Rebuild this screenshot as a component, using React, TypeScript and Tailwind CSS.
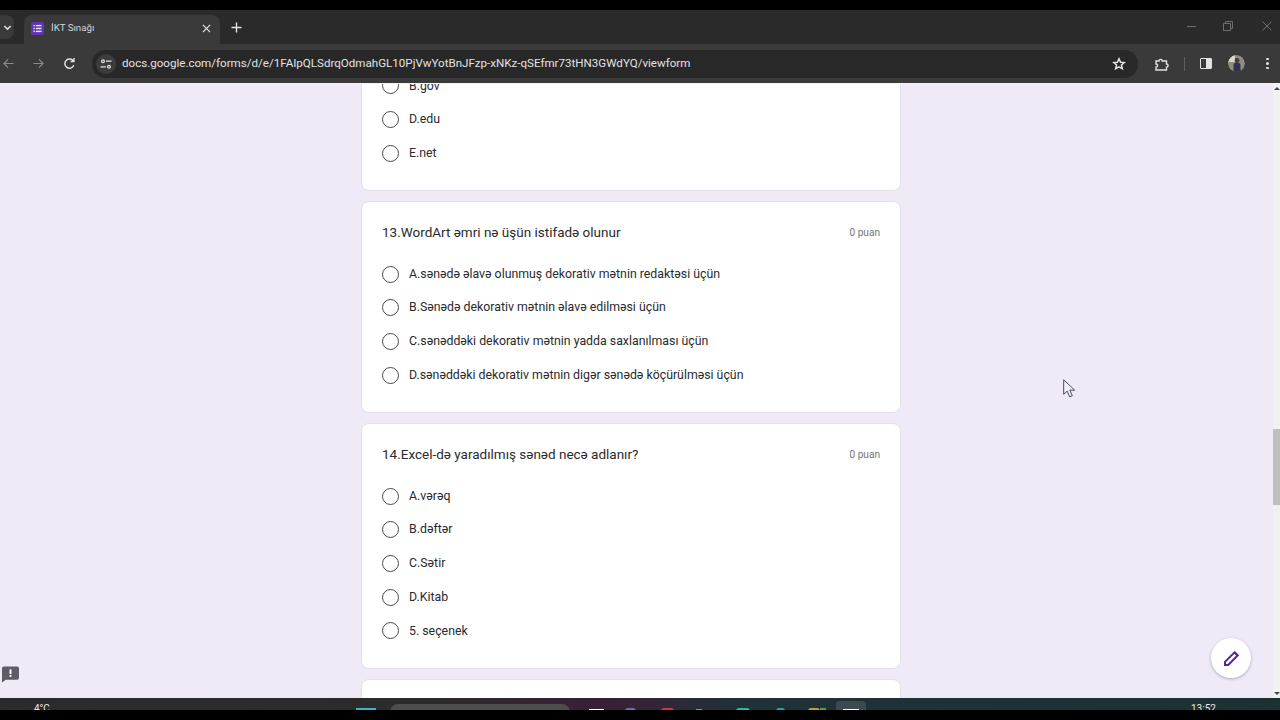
const sections = [
  {
    title: "13.WordArt əmri nə üşün istifadə olunur",
    options: [
      "A.sənədə əlavə olunmuş dekorativ mətnin redaktəsi üçün",
      "B.Sənədə dekorativ mətnin əlavə edilməsi üçün",
      "C.sənəddəki dekorativ mətnin yadda saxlanılması üçün",
      "D.sənəddəki dekorativ mətnin digər sənədə köçürülməsi üçün",
    ],
    height: "h-[211.5px]",
  },
  {
    title: "14.Excel-də yaradılmış sənəd necə adlanır?",
    options: ["A.vərəq", "B.dəftər", "C.Sətir", "D.Kitab", "5. seçenek"],
    height: "h-[245.5px]",
  },
];

function Option({ label }: { label: string }) {
  return (
    <div className="flex h-[33.7px] shrink-0 items-center">
      <div className="h-[17px] w-[17px] shrink-0 rounded-full border-[1.5px] border-[#4a4a4a]" />
      <span className="ml-[10px] text-[12.34px] text-[#2a2b2e]">{label}</span>
    </div>
  );
}

function Tabstrip() {
  return (
    <div className="flex h-[34px] shrink-0 items-end bg-[#2a2a2a]">
      <div className="mb-[5px] flex h-6 w-[14px] items-center justify-center rounded-r-lg bg-[#3a3a3a]">
        <svg width="9" height="9" viewBox="0 0 10 10" fill="none" stroke="#e3e3e3" strokeWidth="1.6">
          <path d="M1.5 3.2 5 6.8l3.5-3.6" />
        </svg>
      </div>
      <div className="ml-[10px] flex h-[29px] w-[196px] items-center rounded-t-lg bg-[#3a3a3a] pb-[2px] pl-[7px]">
        <div className="flex h-[13px] w-[13px] items-center justify-center rounded-[2px] bg-[#5e35b1]">
          <svg width="9" height="9" viewBox="0 0 10 10" fill="#e8e0f5">
            <rect x="0.5" y="1" width="1.6" height="1.6" />
            <rect x="3.2" y="1" width="6.3" height="1.6" />
            <rect x="0.5" y="4.2" width="1.6" height="1.6" />
            <rect x="3.2" y="4.2" width="6.3" height="1.6" />
            <rect x="0.5" y="7.4" width="1.6" height="1.6" />
            <rect x="3.2" y="7.4" width="6.3" height="1.6" />
          </svg>
        </div>
        <span className="ml-[7px] flex-1 text-[9.7px] text-[#d5d5d5]">İKT Sınağı</span>
        <svg className="mr-[9px]" width="9" height="9" viewBox="0 0 10 10" stroke="#e3e3e3" strokeWidth="1.4">
          <path d="m1 1 8 8M9 1l-8 8" />
        </svg>
      </div>
      <svg className="mb-[11px] ml-[11px]" width="11" height="11" viewBox="0 0 11 11" stroke="#e3e3e3" strokeWidth="1.4">
        <path d="M5.5 0.5v10M0.5 5.5h10" />
      </svg>
      <div className="mb-[13px] ml-auto flex items-center gap-[29px] pr-[8px]">
        <div className="-mr-[2px] h-px w-[9px] bg-[#6e6e6e]" />
        <svg width="10" height="10" viewBox="0 0 10 10" fill="none" stroke="#6e6e6e">
          <path d="M.5 2.5h7v7h-7zM2.5 2.5v-2h7v7h-2" />
        </svg>
        <svg width="10" height="10" viewBox="0 0 10 10" stroke="#6e6e6e">
          <path d="m.5.5 9 9M9.5.5l-9 9" />
        </svg>
      </div>
    </div>
  );
}

function Toolbar() {
  return (
    <div className="flex h-[39px] shrink-0 items-center bg-[#3a3a3a]">
      <svg className="ml-[3px]" width="11" height="11" viewBox="0 0 12 12" fill="none" stroke="#8a8a8a" strokeWidth="1.3">
        <path d="M11.5 6H1M5.5 1.5 1 6l4.5 4.5" />
      </svg>
      <svg className="ml-[19px]" width="11" height="11" viewBox="0 0 12 12" fill="none" stroke="#8a8a8a" strokeWidth="1.3">
        <path d="M.5 6H11M6.5 1.5 11 6l-4.5 4.5" />
      </svg>
      <svg className="ml-[19px]" width="13" height="13" viewBox="0 0 14 14" fill="none" stroke="#e3e3e3" strokeWidth="1.5">
        <path d="M11.6 9a5 5 0 1 1-.3-4.4M11.8 1.2v3.7H8.1" />
      </svg>
      <div className="ml-[16px] flex h-[28px] w-[1046px] items-center rounded-full bg-[#282828]">
        <div className="ml-[4px] flex h-[20px] w-[20px] items-center justify-center rounded-full bg-[#3c3c3c]">
          <svg width="12" height="12" viewBox="0 0 12 12" fill="none" stroke="#e3e3e3" strokeWidth="1.2">
            <circle cx="3" cy="3.2" r="1.4" />
            <path d="M6 3.2h5.5M.5 8.8H6" />
            <circle cx="9" cy="8.8" r="1.4" />
          </svg>
        </div>
        <span className="ml-[6px] text-[11.58px] text-[#e3e3e3]">
          docs.google.com/forms/d/e/1FAIpQLSdrqOdmahGL10PjVwYotBnJFzp-xNKz-qSEfmr73tHN3GWdYQ/viewform
        </span>
        <svg className="ml-auto mr-[12px]" width="14" height="14" viewBox="0 0 24 24" fill="none" stroke="#e3e3e3" strokeWidth="2.6">
          <path d="m12 3 2.7 6 6.3.6-4.8 4.2 1.5 6.3L12 16.8 6.3 20.1l1.5-6.3L3 9.6 9.3 9z" />
        </svg>
      </div>
      <svg className="ml-[17px]" width="14" height="14" viewBox="0 0 14 14" fill="none" stroke="#e3e3e3" strokeWidth="1.4">
        <path d="M1 4h3a1.6 1.6 0 0 1 3.2 0h4.3v3a1.6 1.6 0 0 1 0 3.2V13H1v-2.8a1.6 1.6 0 0 0 0-3.2z" />
      </svg>
      <div className="ml-[15px] h-[14px] w-px bg-[#5c5c5c]" />
      <div className="ml-[15px] flex h-[11px] w-[12px] rounded-[1px] border-[1.3px] border-[#e3e3e3]">
        <div className="ml-auto h-full w-[5px] bg-[#e3e3e3]" />
      </div>
      <svg className="ml-[16px] rounded-full" width="17" height="17" viewBox="0 0 17 17">
        <circle cx="8.5" cy="8.5" r="8.5" fill="#8f8d7c" />
        <path d="M0 8.5a8.5 8.5 0 0 1 7-8.4V7H1z" fill="#d8d8cc" />
        <circle cx="9" cy="5.5" r="2.4" fill="#4a3a3a" />
        <path d="M5.5 17V10c0-1.5 1.5-2.4 3.5-2.4s3.5.9 3.5 2.4v7z" fill="#2f3350" />
      </svg>
      <div className="ml-[21px] flex flex-col gap-[2px]">
        <div className="h-[2.5px] w-[2.5px] rounded-full bg-[#e3e3e3]" />
        <div className="h-[2.5px] w-[2.5px] rounded-full bg-[#e3e3e3]" />
        <div className="h-[2.5px] w-[2.5px] rounded-full bg-[#e3e3e3]" />
      </div>
    </div>
  );
}

function Scrollbar() {
  return (
    <div className="flex w-[7px] shrink-0 flex-col bg-[#f1f1f1]">
      <div className="flex h-[9px] items-center justify-end">
        <div className="h-0 w-0 border-x-[3px] border-b-[3px] border-x-transparent border-b-[#444]" />
      </div>
      <div className="mt-[336px] h-[76px] bg-[#bfbfbf]" />
      <div className="mt-auto flex h-[9px] items-center justify-end">
        <div className="h-0 w-0 border-x-[3px] border-t-[3px] border-x-transparent border-t-[#444]" />
      </div>
    </div>
  );
}

export default function App() {
  return (
    <div className="flex h-[720px] w-[1280px] flex-col overflow-hidden bg-black font-['Roboto',sans-serif]">
      <div className="h-[10px] shrink-0 bg-black" />
      <Tabstrip />
      <Toolbar />
      <div className="h-px shrink-0 bg-[#f4f2f8]" />

      <div className="relative flex h-[614px] shrink-0 bg-[#efeaf6]">
        <div className="flex-1 overflow-hidden">
          <div className="ml-[361px] flex w-[540px] flex-col gap-[10.5px]">
            <div className="-mt-[17px] flex h-[123.5px] shrink-0 flex-col rounded-b-lg border border-[#e4e0ea] bg-white px-[20px] pt-[1px]">
              <Option label="B.gov" />
              <Option label="D.edu" />
              <Option label="E.net" />
            </div>
            {sections.map((section) => (
              <div
                key={section.title}
                className={`flex shrink-0 flex-col rounded-lg border border-[#e4e0ea] bg-white px-[20px] pt-[18px] ${section.height}`}
              >
                <div className="mb-[13.2px] flex h-[24px] items-center justify-between">
                  <span className="text-[13.5px] text-[#2a2b2e]">{section.title}</span>
                  <span className="pt-[2px] text-[10.1px] text-[#70757a]">0 puan</span>
                </div>
                {section.options.map((option) => (
                  <Option key={option} label={option} />
                ))}
              </div>
            ))}
            <div className="h-[60px] shrink-0 rounded-t-lg border border-[#e4e0ea] bg-white" />
          </div>
        </div>
        <Scrollbar />

        {/* report button and edit button sit over the page */}
        <svg className="absolute bottom-[15px] left-[2px]" width="17" height="17" viewBox="0 0 18 17">
          <path d="M2 0h14a2 2 0 0 1 2 2v10a2 2 0 0 1-2 2H4l-4 3V2a2 2 0 0 1 2-2z" fill="#5f5c66" />
          <rect x="8" y="3" width="2" height="5" fill="#fff" />
          <rect x="8" y="9" width="2" height="2" fill="#fff" />
        </svg>
        <div className="absolute bottom-[20px] right-[29px] flex h-[40px] w-[40px] items-center justify-center rounded-full bg-white shadow-[0_1px_3px_rgba(60,40,90,0.35)]">
          <svg width="17" height="17" viewBox="0 0 17 17" fill="none">
            <path d="M2 15V11.8L11.5 2.4l3.1 3.1L5.2 15z" stroke="#4f2a9e" strokeWidth="2" />
            <path d="m10.5 2.7 1.4-1.5 3.9 3.9-1.4 1.5z" fill="#4f2a9e" />
          </svg>
        </div>
        <svg className="absolute left-[1063px] top-[295px]" width="13" height="19" viewBox="0 0 13 19">
          <path d="M.7.8v14.5l3.5-3.2 2.5 5.8 2.6-1.1-2.5-5.6h4.9z" fill="#f3f1f8" stroke="#4c4a55" strokeWidth="1" />
        </svg>
      </div>

      {/* taskbar, only its top edge shows above the black band */}
      <div className="relative h-[12px] shrink-0 overflow-hidden bg-[linear-gradient(90deg,#2b2b2d_0%,#2d2a2c_35%,#3a1f35_47%,#1f3235_58%,#1d3133_100%)]">
        <span className="absolute left-[34px] top-[6px] text-[10px] leading-none text-[#e8e8e8]">4°C</span>
        <div className="absolute left-[356px] top-[10px] h-[6px] w-[20px] bg-[#39b5c4]" />
        <div className="absolute left-[390px] top-[6px] h-[20px] w-[180px] rounded-lg bg-[#4d4d4f]" />
        <div className="absolute left-[589px] top-[11px] h-[4px] w-[15px] bg-white" />
        <div className="absolute left-[625px] top-[10px] h-[6px] w-[11px] rounded-full bg-[#8a5bb5]" />
        <div className="absolute left-[661px] top-[10px] h-[6px] w-[13px] rounded-full bg-[#d6323f]" />
        <div className="absolute left-[696px] top-[11px] h-[4px] w-[6px] bg-[#9a9a4a]" />
        <div className="absolute left-[736px] top-[10px] h-[6px] w-[14px] rounded-full bg-[#2fb8a8]" />
        <div className="absolute left-[776px] top-[10px] h-[6px] w-[9px] rounded-full bg-[#2a9fc4]" />
        <div className="absolute left-[808px] top-[10px] h-[6px] w-[12px] rounded-full bg-[#c89a3c]" />
        <div className="absolute left-[820px] top-[10px] h-[6px] w-[6px] bg-[#4ea04a]" />
        <div className="absolute left-[836px] top-[3px] h-[12px] w-[30px] rounded bg-[#3b4a4c]" />
        <div className="absolute left-[843px] top-[11px] h-[4px] w-[16px] bg-white" />
        <span className="absolute left-[1191px] top-[6px] text-[10px] leading-none text-[#e8e8e8]">13:52</span>
      </div>
      <div className="flex-1 bg-black" />
    </div>
  );
}
